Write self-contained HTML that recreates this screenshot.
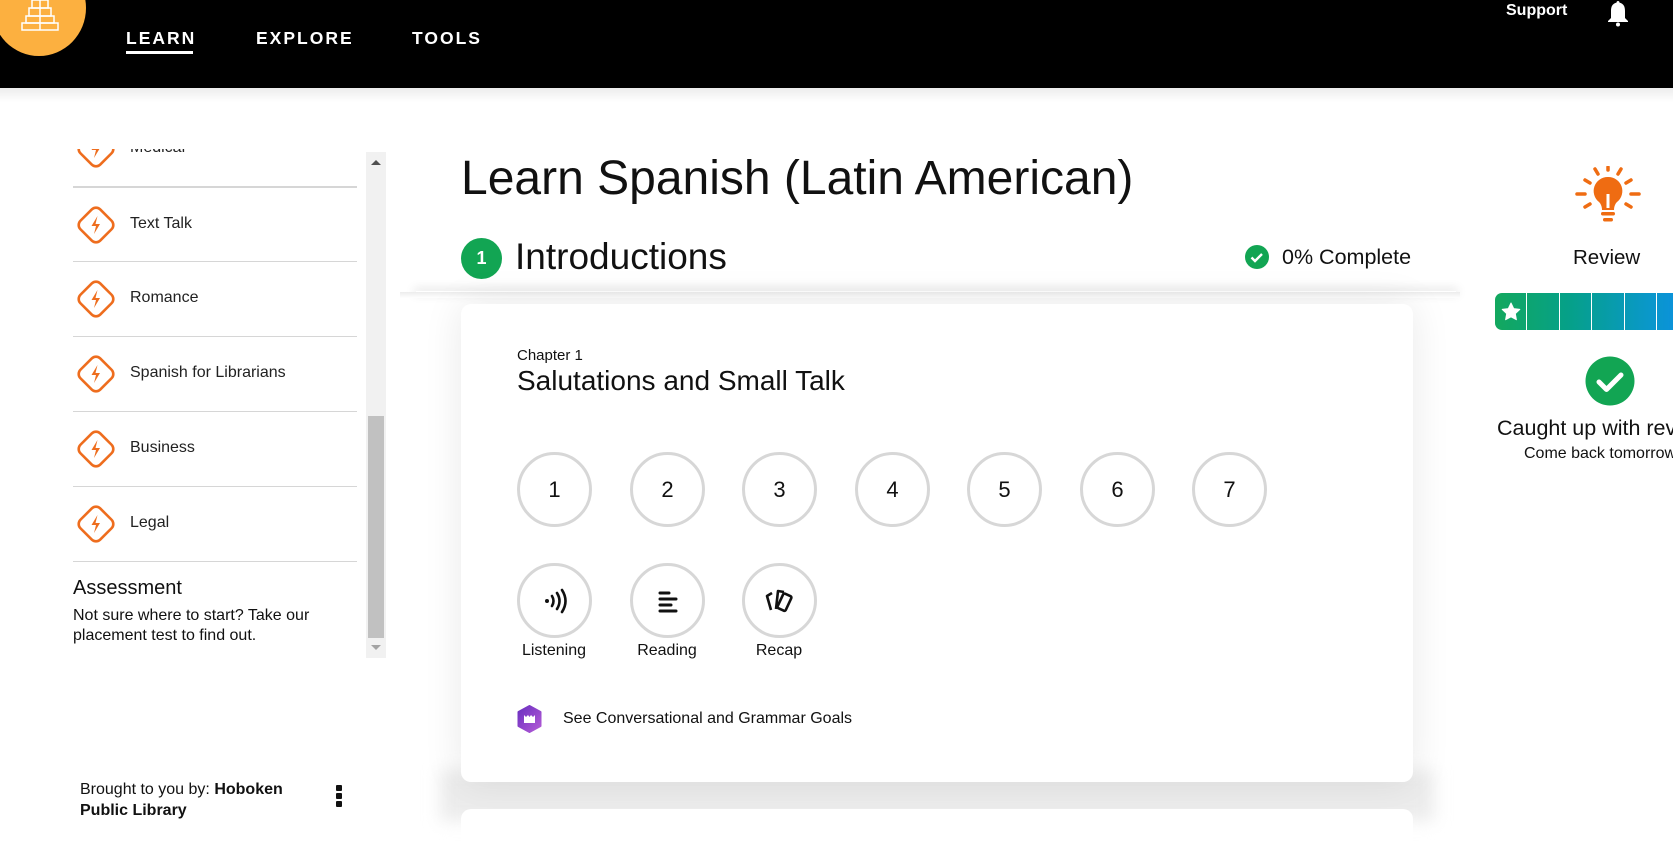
<!DOCTYPE html>
<html><head><meta charset="utf-8">
<style>
*{box-sizing:border-box;margin:0;padding:0}
body{width:1673px;height:821px;overflow:hidden;background:#fff;font-family:"Liberation Sans",sans-serif;color:#111;position:relative}
.abs{position:absolute}
.hdr{left:0;top:0;width:1673px;height:88px;background:#000}
.nav{color:#fff;font-weight:bold;font-size:17.5px;letter-spacing:2px;top:28px}
.row{position:absolute;left:73px;width:284px;height:75px;border-bottom:1px solid #d6d6d6}
.row svg{position:absolute;left:0;top:14px}
.row span{position:absolute;left:57px;top:27px;font-size:16px;color:#222}
.circ{position:absolute;width:75px;height:75px;border:3.5px solid #d7d7d7;border-radius:50%;display:flex;align-items:center;justify-content:center;font-size:22px;color:#111;background:#fff}
.lbl{position:absolute;font-size:16px;color:#111;width:120px;text-align:center}
</style></head><body>
<div class="abs hdr"></div>
<div class="abs" style="left:-8px;top:-40px;width:94px;height:96px;border-radius:50%;background:#fcb040"></div>
<svg class="abs" style="left:20px;top:0" width="40" height="32" viewBox="0 0 40 32"><g fill="none" stroke="#fff" stroke-width="1.5"><rect x="12" y="0" width="16" height="8"/><rect x="9" y="8" width="22" height="8"/><rect x="6" y="16" width="28" height="7"/><rect x="2" y="23" width="36" height="7"/><line x1="20" y1="0" x2="20" y2="30"/></g></svg>
<div class="abs nav" style="left:126px">LEARN</div>
<div class="abs" style="left:126px;top:51px;width:67px;height:3px;background:#fff"></div>
<div class="abs nav" style="left:256px">EXPLORE</div>
<div class="abs nav" style="left:412px">TOOLS</div>
<div class="abs" style="left:1506px;top:2px;color:#fff;font-weight:bold;font-size:16px">Support</div>
<svg class="abs" style="left:1606px;top:0" width="24" height="27" viewBox="0 0 24 27"><path d="M12 1c-1 0-1.5.8-1.5 1.6C6 3.8 5 7 5 11v7l-3 3v1h20v-1l-3-3v-7c0-4-1-7.2-5.5-8.4C13.5 1.8 13 1 12 1z" fill="#fff"/><circle cx="12" cy="24.5" r="2" fill="#fff"/></svg>
<div class="abs" style="left:0;top:88px;width:1673px;height:14px;background:linear-gradient(#ececec,#fff)"></div>

<!-- sidebar -->
<div class="abs" style="left:0;top:149px;width:390px;height:100px;overflow:hidden">
<div class="row" style="top:-37px"><svg width="46" height="46" viewBox="0 0 46 46"><rect x="9" y="9" width="28" height="28" rx="6" transform="rotate(45 23 23)" fill="none" stroke="#ee6d1e" stroke-width="2.6"/><path d="M24.5 14l-6 10h4.5l-2 8 6-10h-4.5z" fill="#ee6d1e"/></svg><span>Medical</span></div>
</div>
<div class="row" style="top:187px;border-top:1px solid #d6d6d6;height:75px"><svg width="46" height="46" viewBox="0 0 46 46"><rect x="9" y="9" width="28" height="28" rx="6" transform="rotate(45 23 23)" fill="none" stroke="#ee6d1e" stroke-width="2.6"/><path d="M24.5 14l-6 10h4.5l-2 8 6-10h-4.5z" fill="#ee6d1e"/></svg><span>Text Talk</span></div>
<div class="row" style="top:262px"><svg width="46" height="46" viewBox="0 0 46 46"><rect x="9" y="9" width="28" height="28" rx="6" transform="rotate(45 23 23)" fill="none" stroke="#ee6d1e" stroke-width="2.6"/><path d="M24.5 14l-6 10h4.5l-2 8 6-10h-4.5z" fill="#ee6d1e"/></svg><span>Romance</span></div>
<div class="row" style="top:337px"><svg width="46" height="46" viewBox="0 0 46 46"><rect x="9" y="9" width="28" height="28" rx="6" transform="rotate(45 23 23)" fill="none" stroke="#ee6d1e" stroke-width="2.6"/><path d="M24.5 14l-6 10h4.5l-2 8 6-10h-4.5z" fill="#ee6d1e"/></svg><span>Spanish for Librarians</span></div>
<div class="row" style="top:412px"><svg width="46" height="46" viewBox="0 0 46 46"><rect x="9" y="9" width="28" height="28" rx="6" transform="rotate(45 23 23)" fill="none" stroke="#ee6d1e" stroke-width="2.6"/><path d="M24.5 14l-6 10h4.5l-2 8 6-10h-4.5z" fill="#ee6d1e"/></svg><span>Business</span></div>
<div class="row" style="top:487px"><svg width="46" height="46" viewBox="0 0 46 46"><rect x="9" y="9" width="28" height="28" rx="6" transform="rotate(45 23 23)" fill="none" stroke="#ee6d1e" stroke-width="2.6"/><path d="M24.5 14l-6 10h4.5l-2 8 6-10h-4.5z" fill="#ee6d1e"/></svg><span>Legal</span></div>
<div class="abs" style="left:73px;top:577px;font-size:20px;color:#111">Assessment</div>
<div class="abs" style="left:73px;top:606px;font-size:16px;line-height:20px;color:#111;width:290px">Not sure where to start? Take our placement test to find out.</div>
<div class="abs" style="left:366px;top:152px;width:20px;height:506px;background:#f1f1f1"></div>
<div class="abs" style="left:368px;top:416px;width:16px;height:222px;background:#c1c1c1"></div>
<div class="abs" style="left:371px;top:160px;width:0;height:0;border-left:5px solid transparent;border-right:5px solid transparent;border-bottom:5px solid #505050"></div>
<div class="abs" style="left:371px;top:645px;width:0;height:0;border-left:5px solid transparent;border-right:5px solid transparent;border-top:5px solid #a3a3a3"></div>
<div class="abs" style="left:80px;top:779px;font-size:16px;line-height:21px;color:#111">Brought to you by: <b>Hoboken<br>Public Library</b></div>
<div class="abs" style="left:336px;top:785px;width:6px">
<div style="width:6px;height:6px;background:#111;border-radius:1px;margin-bottom:2px"></div><div style="width:6px;height:6px;background:#111;border-radius:1px;margin-bottom:2px"></div><div style="width:6px;height:6px;background:#111;border-radius:1px"></div></div>

<!-- main -->
<div class="abs" style="left:416px;top:291px;width:1040px;height:1px;box-shadow:0 0 10px 2px rgba(0,0,0,.14)"></div>
<div class="abs" style="left:440px;top:770px;width:994px;height:51px;background:#ececec;filter:blur(8px)"></div>
<div class="abs" style="left:400px;top:292px;width:1060px;height:6px;background:linear-gradient(#ececec,#fff)"></div>
<div class="abs" style="left:461px;top:151px;font-size:48px;color:#111">Learn Spanish (Latin American)</div>
<div class="abs" style="left:461px;top:238px;width:41px;height:41px;border-radius:50%;background:#12a553;color:#fff;font-size:18px;font-weight:bold;text-align:center;line-height:41px">1</div>
<div class="abs" style="left:515px;top:236px;font-size:37px;color:#111">Introductions</div>
<svg class="abs" style="left:1245px;top:245px" width="24" height="24" viewBox="0 0 24 24"><circle cx="12" cy="12" r="12" fill="#12a553"/><path d="M6.5 12.5l3.5 3.5 7-7" fill="none" stroke="#fff" stroke-width="2.4"/></svg>
<div class="abs" style="left:1282px;top:245px;font-size:21.5px;color:#111">0% Complete</div>

<div class="abs" style="left:461px;top:304px;width:952px;height:478px;background:#fff;border-radius:10px;box-shadow:0 0 40px rgba(0,0,0,.09)"></div>
<div class="abs" style="left:461px;top:809px;width:952px;height:40px;background:#fff;border-radius:10px"></div>
<div class="abs" style="left:517px;top:347px;font-size:15px;color:#111">Chapter 1</div>
<div class="abs" style="left:517px;top:365px;font-size:28px;color:#111">Salutations and Small Talk</div>

<div class="circ" style="left:517px;top:452px">1</div>
<div class="circ" style="left:630px;top:452px">2</div>
<div class="circ" style="left:742px;top:452px">3</div>
<div class="circ" style="left:855px;top:452px">4</div>
<div class="circ" style="left:967px;top:452px">5</div>
<div class="circ" style="left:1080px;top:452px">6</div>
<div class="circ" style="left:1192px;top:452px">7</div>

<div class="circ" style="left:517px;top:563px"><svg width="30" height="30" viewBox="0 0 30 30"><circle cx="7" cy="15" r="2" fill="#111"/><g fill="none" stroke="#111" stroke-width="2.6" stroke-linecap="round"><path d="M12 10q3 5 0 10"/><path d="M17 7q5 8 0 16"/><path d="M22 4q7 11 0 22"/></g></svg></div>
<div class="circ" style="left:630px;top:563px"><svg width="30" height="30" viewBox="0 0 30 30"><g stroke="#111" stroke-width="3" stroke-linecap="round"><line x1="7" y1="7" x2="16" y2="7"/><line x1="7" y1="13" x2="23" y2="13"/><line x1="7" y1="19" x2="18" y2="19"/><line x1="7" y1="25" x2="23" y2="25"/></g></svg></div>
<div class="circ" style="left:742px;top:563px"><svg width="34" height="30" viewBox="0 0 34 30"><g fill="none" stroke="#111" stroke-width="2.6" stroke-linejoin="round"><path d="M9 7l-5 3 4 14"/><path d="M13 23l2-18 6 1"/><rect x="17" y="8" width="9" height="16" rx="1.5" transform="rotate(25 21 16)"/></g></svg></div>
<div class="lbl" style="left:494px;top:642px">Listening</div>
<div class="lbl" style="left:607px;top:642px">Reading</div>
<div class="lbl" style="left:719px;top:642px">Recap</div>
<svg class="abs" style="left:516px;top:705px" width="27" height="28" viewBox="0 0 27 28"><defs><linearGradient id="g" x1="0" y1="0" x2="1" y2="1"><stop offset="0" stop-color="#6a2fc0"/><stop offset="1" stop-color="#b45bd6"/></linearGradient></defs><path d="M13.5 1l11 6v14l-11 6-11-6V7z" fill="url(#g)" stroke="url(#g)" stroke-width="2" stroke-linejoin="round"/><path d="M8 10v8h11v-8l-2 2-2-2-1.5 2-1.5-2-2 2z" fill="#fff"/></svg>
<div class="abs" style="left:563px;top:710px;font-size:16px;color:#111">See Conversational and Grammar Goals</div>

<!-- right panel -->
<svg class="abs" style="left:1575px;top:166px" width="66" height="64" viewBox="0 0 66 64"><g stroke="#ef6c12" stroke-width="3.5" stroke-linecap="round"><line x1="2" y1="28" x2="10" y2="28"/><line x1="56" y1="28" x2="64" y2="28"/><line x1="10" y1="14" x2="15" y2="17"/><line x1="56" y1="14" x2="51" y2="17"/><line x1="10" y1="41" x2="15" y2="38"/><line x1="56" y1="41" x2="51" y2="38"/><line x1="20" y1="3" x2="23" y2="8"/><line x1="46" y1="3" x2="43" y2="8"/><line x1="33" y1="1" x2="33" y2="4"/></g><path d="M33 11a14 14 0 0 0-9 25c2 2 3 5 3 8h12c0-3 1-6 3-8a14 14 0 0 0-9-25z" fill="#ef6c12"/><line x1="33" y1="28" x2="33" y2="42" stroke="#fff" stroke-width="3"/><rect x="26" y="46" width="14" height="3.5" rx="1.7" fill="#ef6c12"/><rect x="28" y="52" width="10" height="3.5" rx="1.7" fill="#ef6c12"/></svg>
<div class="abs" style="left:1573px;top:246px;font-size:20.5px;color:#111">Review</div>
<div class="abs" style="left:1495px;top:293px;width:190px;height:37px;border-radius:7px;background:linear-gradient(90deg,#13a85e,#05a08a 40%,#0a98c8 80%,#0b90e0);overflow:hidden">
<div class="abs" style="left:31px;top:0;width:1px;height:37px;background:#fff"></div>
<div class="abs" style="left:64px;top:0;width:1px;height:37px;background:#fff"></div>
<div class="abs" style="left:96px;top:0;width:1px;height:37px;background:#fff"></div>
<div class="abs" style="left:129px;top:0;width:1px;height:37px;background:#fff"></div>
<div class="abs" style="left:161px;top:0;width:1px;height:37px;background:#fff"></div>
<svg class="abs" style="left:6px;top:9px" width="20" height="19" viewBox="0 0 20 19"><path d="M10 1l2.7 5.6 6.1.8-4.5 4.2 1.1 6.1L10 14.8l-5.4 2.9 1.1-6.1L1.2 7.4l6.1-.8z" fill="#fff" stroke="#fff" stroke-linejoin="round"/></svg>
</div>
<svg class="abs" style="left:1585px;top:356px" width="50" height="50" viewBox="0 0 50 50"><circle cx="25" cy="25" r="24.5" fill="#12a553"/><path d="M14 26l7.5 7.5L36 19" fill="none" stroke="#fff" stroke-width="5" stroke-linecap="round" stroke-linejoin="round"/></svg>
<div class="abs" style="left:1497px;top:416px;font-size:21.5px;color:#111;white-space:nowrap">Caught up with reviews</div>
<div class="abs" style="left:1524px;top:445px;font-size:16px;color:#111;white-space:nowrap">Come back tomorrow</div>
</body></html>
